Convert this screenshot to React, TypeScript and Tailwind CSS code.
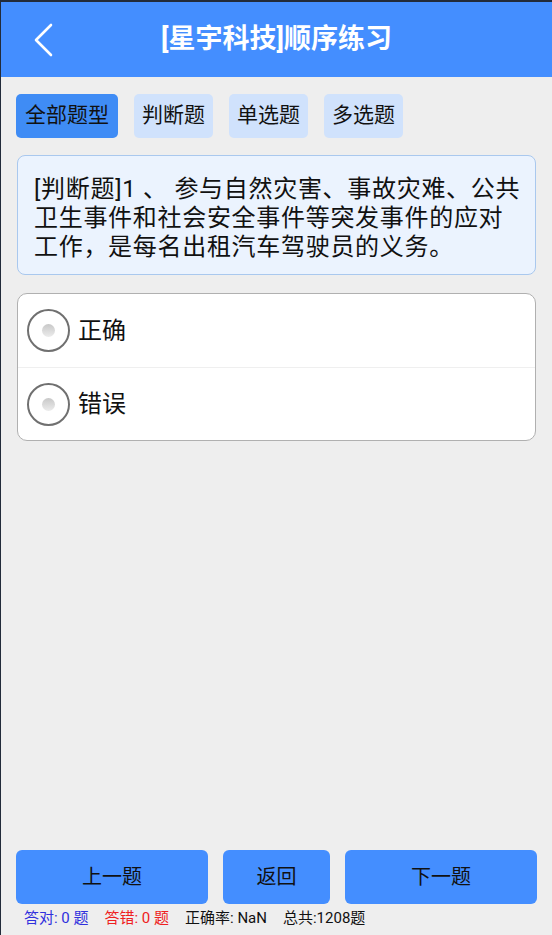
import { useState } from "react";

const tabs = ["全部题型", "判断题", "单选题", "多选题"];

function Radio({ checked }: { checked: boolean }) {
  return (
    <span className="flex h-[43px] w-[43px] shrink-0 items-center justify-center rounded-full border-2 border-[#707070] bg-white">
      <span
        className={`h-[13px] w-[13px] rounded-full ${
          checked ? "bg-[#448eff]" : "bg-gradient-to-b from-[#c8c8c8] to-[#ececec]"
        }`}
      />
    </span>
  );
}

export default function App() {
  const [tab, setTab] = useState(0);
  const [picked, setPicked] = useState<number | null>(null);
  const options = ["正确", "错误"];

  return (
    <div
      className="flex h-[935px] w-full flex-col overflow-hidden border-t-2 border-l border-[#222b3a] bg-[#eeeeee]"
      style={{ fontFamily: 'Roboto, "Noto Sans CJK SC", sans-serif' }}
    >
      {/* Title bar */}
      <div className="relative flex h-[75px] shrink-0 items-center justify-center bg-[#448eff]">
        <button className="absolute left-[29px] top-[20px] flex h-[36px] w-[26px] items-center justify-center">
          <svg width="22" height="34" viewBox="0 0 22 34" fill="none">
            <polyline
              points="19,2 4,17 19,32"
              stroke="white"
              strokeWidth="2.6"
              strokeLinecap="round"
              strokeLinejoin="round"
            />
          </svg>
        </button>
        <h1 className="text-[27px] font-bold text-white">[星宇科技]顺序练习</h1>
      </div>

      {/* Question type tabs */}
      <div className="mt-[17px] flex gap-[16px] px-[15px]">
        {tabs.map((t, i) => (
          <button
            key={t}
            onClick={() => setTab(i)}
            className={`flex h-[44px] items-center justify-center rounded-[5px] text-[21px] text-[#111] ${
              i === 0 ? "w-[102px]" : "w-[79px]"
            } ${i === tab ? "bg-[#3f8cf5]" : "bg-[#d0e2fc]"}`}
          >
            {t}
          </button>
        ))}
      </div>

      {/* Question */}
      <div className="mx-[16px] mt-[17px] rounded-[8px] border border-[#a9c8ee] bg-[#ebf3fe] pt-[19px] pb-[12px] pl-[16px] pr-[14px] text-[24px] leading-[29px] tracking-[0.7px] text-[#111]">
        [判断题]1 、 参与自然灾害、事故灾难、公共卫生事件和社会安全事件等突发事件的应对工作，是每名出租汽车驾驶员的义务。
      </div>

      {/* Options */}
      <div className="mx-[16px] mt-[18px] overflow-hidden rounded-[10px] border border-[#b0b0b0] bg-white">
        {options.map((o, i) => (
          <button
            key={o}
            onClick={() => setPicked(i)}
            className={`flex h-[73px] w-full items-center gap-[8px] pl-[9px] text-left ${
              i > 0 ? "border-t border-[#efefef]" : ""
            }`}
          >
            <Radio checked={picked === i} />
            <span className="text-[24px] text-[#111]">{o}</span>
          </button>
        ))}
      </div>

      <div className="flex-1" />

      {/* Navigation */}
      <div className="flex gap-[15px] px-[15px]">
        <button className="flex h-[54px] flex-1 items-center justify-center rounded-[6px] bg-[#448eff] text-[20px] text-[#111]">
          上一题
        </button>
        <button className="flex h-[54px] w-[107px] items-center justify-center rounded-[6px] bg-[#448eff] text-[20px] text-[#111]">
          返回
        </button>
        <button className="flex h-[54px] flex-1 items-center justify-center rounded-[6px] bg-[#448eff] text-[20px] text-[#111]">
          下一题
        </button>
      </div>

      {/* Stats */}
      <div className="flex h-[31px] items-center gap-[16px] pl-[23px] pb-[2px] text-[15px]">
        <span className="text-[#3030dd]">答对: 0 题</span>
        <span className="text-[#ee2020]">答错: 0 题</span>
        <span className="text-[#111]">正确率: NaN</span>
        <span className="text-[#111]">总共:1208题</span>
      </div>
    </div>
  );
}
